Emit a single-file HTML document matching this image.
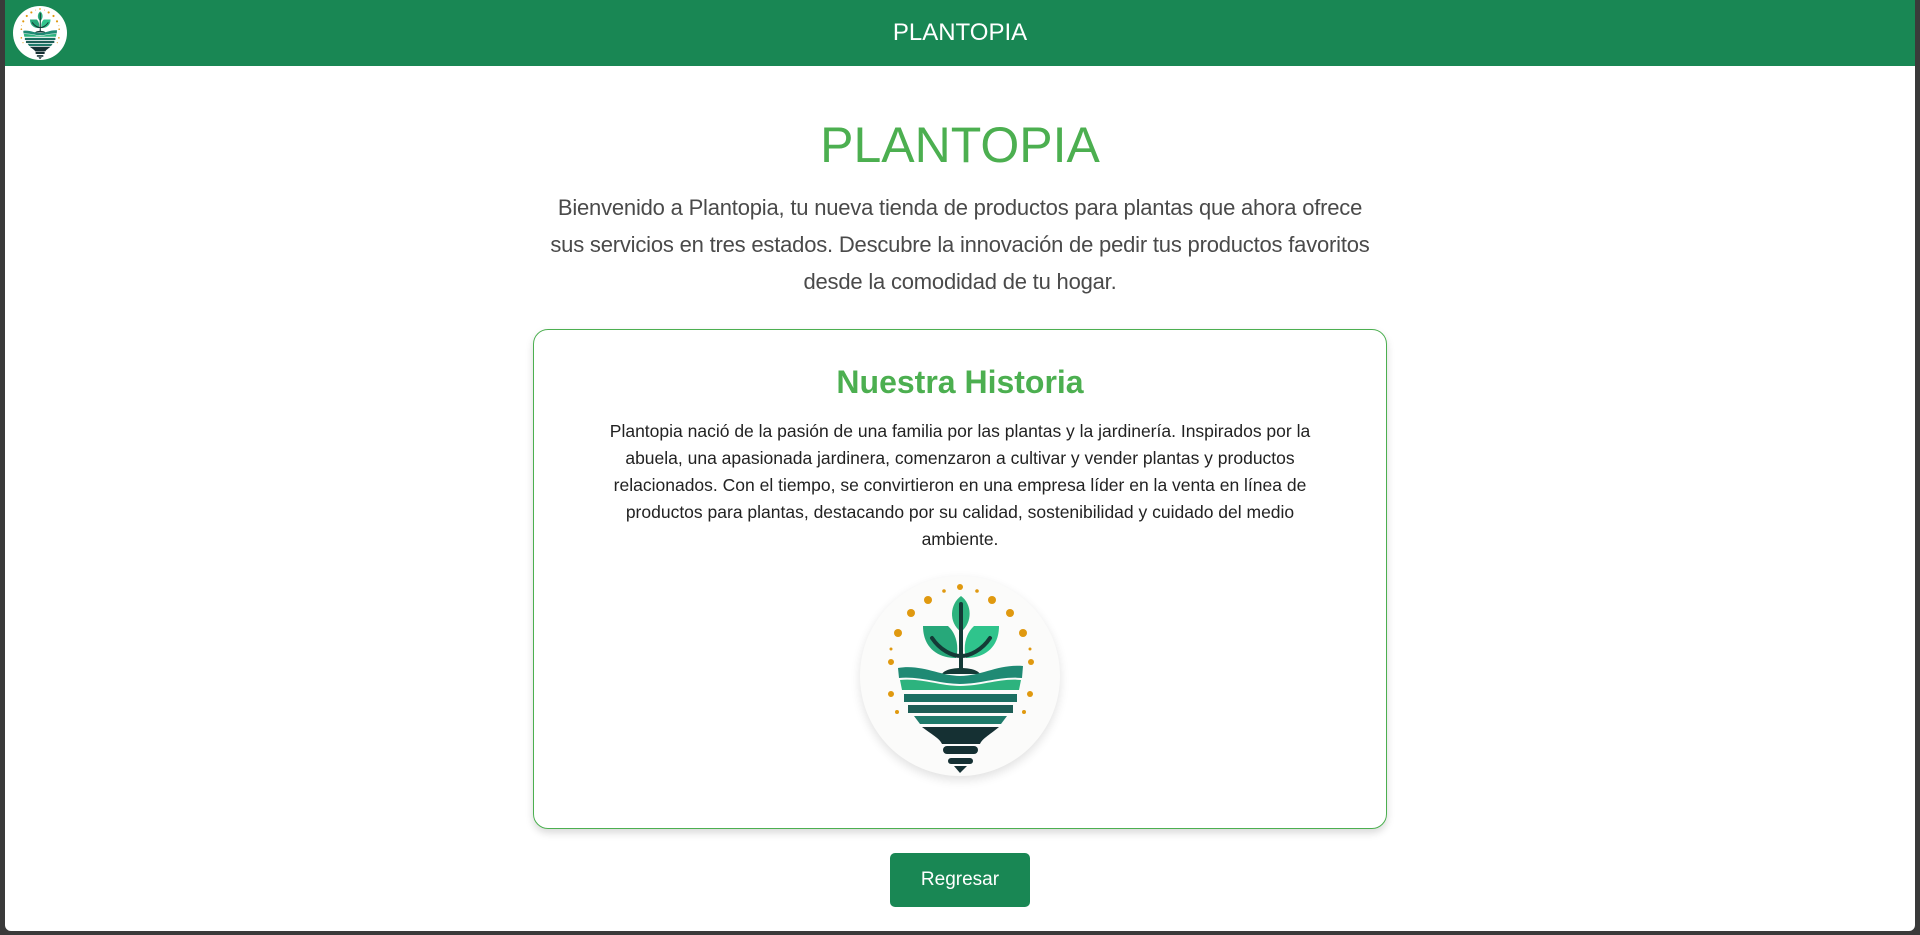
<!DOCTYPE html>
<html><head><meta charset="utf-8">
<style>
html,body{margin:0;padding:0;width:1920px;height:935px;overflow:hidden;background:#3a3a3a;font-family:"Liberation Sans",sans-serif}
#frame{position:absolute;left:5px;top:0;width:1910px;height:931px;background:#fff;border-radius:0 0 6px 6px;overflow:hidden}
#hdr{position:absolute;left:0;top:0;width:1910px;height:66px;background:#198754}
#hdr .t{position:absolute;left:0;width:1910px;top:19px;text-align:center;color:#fff;font-size:24px;line-height:28px}
#hlogo{position:absolute;left:8px;top:6px;width:54px;height:54px;border-radius:50%;background:#fff;overflow:hidden}
h1{position:absolute;left:0;width:1910px;top:115px;margin:0;text-align:center;color:#4caf50;font-weight:normal;font-size:50px;line-height:60px}
.intro{position:absolute;left:0;width:1910px;top:189px;text-align:center;color:#4a4a4a;font-size:22px;line-height:37px;white-space:nowrap;letter-spacing:-0.2px}
#card{position:absolute;left:528px;top:329px;width:852px;height:498px;border:1px solid #4caf50;border-radius:15px;box-shadow:0 4px 8px rgba(0,0,0,.15)}
#card h2{margin:0;position:absolute;top:32px;left:0;width:852px;text-align:center;color:#4caf50;font-size:32px;line-height:40px;font-weight:bold}
#card .p{position:absolute;top:88px;left:0;width:852px;text-align:center;color:#222;font-size:17.5px;line-height:27px;white-space:nowrap}
#clogo{position:absolute;left:326px;top:246px;width:200px;height:200px;border-radius:50%;background:#fbfbfa;box-shadow:0 4px 10px rgba(0,0,0,.12);overflow:hidden}
#btn{position:absolute;left:885px;top:853px;width:140px;height:54px;background:#198754;border-radius:5px;color:#fff;font-size:19px;line-height:54px;text-align:center}
</style></head><body>
<svg width="0" height="0" style="position:absolute">
<defs>
<g id="logo">
<g fill="#e0990f">
<circle cx="100" cy="11" r="3"/><circle cx="84" cy="15" r="1.8"/><circle cx="117" cy="15" r="1.8"/>
<circle cx="68" cy="24" r="4"/><circle cx="132" cy="24" r="4"/>
<circle cx="51" cy="37" r="4"/><circle cx="150" cy="37" r="4"/>
<circle cx="38" cy="57" r="4"/><circle cx="163" cy="57" r="4"/>
<circle cx="31" cy="73" r="1.5"/><circle cx="170" cy="73" r="1.5"/>
<circle cx="31" cy="86" r="3"/><circle cx="171" cy="86" r="3"/>
<circle cx="31" cy="118" r="3"/><circle cx="170" cy="118" r="3"/>
<circle cx="37" cy="136" r="2"/><circle cx="164" cy="136" r="2"/>
</g>
<path d="M101 20 C90 28 88 46 101 56 C113 46 112 28 101 20Z" fill="#2db37e"/>
<path d="M63 50 L88 50 C97 58 99 72 96 82 C78 82 63 72 63 50Z" fill="#27a87a"/>
<path d="M139 50 L114 50 C105 58 103 72 106 82 C124 82 139 72 139 50Z" fill="#2fc48c"/>
<path d="M101 28 V96 M72 62 C80 74 92 80 101 80 C110 80 122 74 130 62" stroke="#143a36" stroke-width="4" fill="none" stroke-linecap="round"/>
<path d="M82 98 C86 90 116 90 120 98Z" fill="#143a36"/>
<path d="M38 92 C62 88 80 100 100 100 C122 100 138 88 163 90 L162 102 C140 100 122 108 100 108 C80 108 60 100 39 102Z" fill="#1f8a74"/>
<path d="M40 104 C62 102 80 110 100 110 C122 110 140 102 161 104 L159 114 L42 114Z" fill="#2db37e"/>
<rect x="44" y="118" width="113" height="8" fill="#1a6f62"/>
<rect x="48" y="129" width="105" height="8" fill="#1c5d55"/>
<path d="M54 140 H147 L141 148 H60Z" fill="#1e7a6a"/>
<path d="M62 151 H139 C128 160 122 163 120 168 H82 C80 163 74 160 62 151Z" fill="#153033"/>
<rect x="83" y="170" width="35" height="8" rx="4" fill="#153033"/>
<rect x="88" y="182" width="25" height="6" rx="3" fill="#153033"/>
<path d="M94 190 H107 L100 197Z" fill="#153033"/>
</g>
</defs>
</svg>
<div id="frame">
<div id="hdr">
<div id="hlogo"><svg width="54" height="54" viewBox="0 0 200 200"><use href="#logo"/></svg></div>
<div class="t">PLANTOPIA</div>
</div>
<h1>PLANTOPIA</h1>
<div class="intro">Bienvenido a Plantopia, tu nueva tienda de productos para plantas que ahora ofrece<br>sus servicios en tres estados. Descubre la innovación de pedir tus productos favoritos<br>desde la comodidad de tu hogar.</div>
<div id="card">
<h2>Nuestra Historia</h2>
<div class="p">Plantopia nació de la pasión de una familia por las plantas y la jardinería. Inspirados por la<br>abuela, una apasionada jardinera, comenzaron a cultivar y vender plantas y productos<br>relacionados. Con el tiempo, se convirtieron en una empresa líder en la venta en línea de<br>productos para plantas, destacando por su calidad, sostenibilidad y cuidado del medio<br>ambiente.</div>
<div id="clogo"><svg width="200" height="200" viewBox="0 0 200 200"><use href="#logo"/></svg></div>
</div>
<div id="btn">Regresar</div>
</div>
</body></html>
